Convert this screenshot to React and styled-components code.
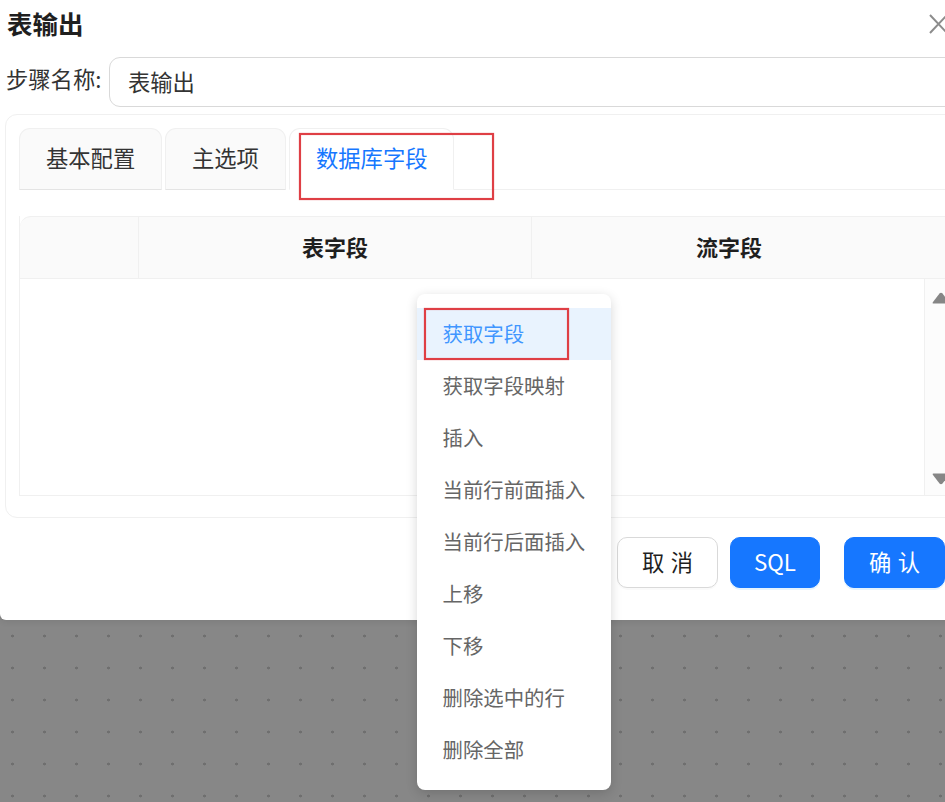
import React from 'react';
import styled, { createGlobalStyle } from 'styled-components';

const GlobalStyle = createGlobalStyle`
  html, body {
    margin: 0;
    padding: 0;
    overflow: hidden;
  }
  body {
    font-family: "Noto Sans CJK SC", "Liberation Sans", sans-serif;
  }
`;

const Page = styled.div`
  position: relative;
  width: 945px;
  height: 802px;
  overflow: hidden;
  background-color: #878787;
  background-image: radial-gradient(circle at 12.5px 12px, #6f6f6f 1.2px, transparent 1.7px);
  background-size: 32px 32px;
  background-position: 0 16px;
`;

const Modal = styled.div`
  position: relative;
  width: 960px;
  height: 620px;
  box-sizing: border-box;
  padding-left: 5px;
  background: #fff;
  border-bottom-left-radius: 6px;
  box-shadow: 0 2px 6px rgba(0, 0, 0, 0.08);
`;

const Header = styled.div`
  display: flex;
  align-items: center;
  justify-content: space-between;
  height: 48px;
  padding: 0 12px 0 2px;
`;

const Title = styled.div`
  font-size: 25.5px;
  line-height: 30px;
  margin-top: -3px;
  font-weight: 700;
  color: #1f1f1f;
`;

const NameRow = styled.div`
  display: flex;
  align-items: center;
  height: 50px;
  margin-top: 9px;
`;

const NameLabel = styled.label`
  width: 104px;
  flex: none;
  padding-left: 1px;
  box-sizing: border-box;
  margin-top: -8px;
  font-size: 22.3px;
  color: #333;
`;

const NameInput = styled.input`
  flex: 1;
  height: 50px;
  box-sizing: border-box;
  padding: 0 18px 3px;
  border: 1px solid #d9d9d9;
  border-radius: 11px;
  font: inherit;
  font-size: 22.3px;
  color: #333;
  outline: none;
`;

const Card = styled.div`
  height: 404px;
  margin-top: 7px;
  box-sizing: border-box;
  padding: 13px 0 0 13px;
  border: 1px solid #f0f0f0;
  border-radius: 12px;
`;

const TabBar = styled.div`
  display: flex;
  gap: 3px;
  height: 62px;
`;

const Tab = styled.div`
  display: flex;
  align-items: center;
  flex: none;
  width: ${p => p.$width}px;
  box-sizing: border-box;
  padding: 0 0 4px 26px;
  font-size: 22.3px;
  border: 1px solid #f0f0f0;
  border-radius: 11px 11px 0 0;
  background: ${p => (p.$active ? '#fff' : '#fafafa')};
  color: ${p => (p.$active ? '#1677ff' : '#333')};
  border-bottom-color: ${p => (p.$active ? '#fff' : '#e4e4e4')};
`;

const TabFill = styled.div`
  flex: 1;
  margin-left: -3px;
  border-bottom: 1px solid #f0f0f0;
`;

const Table = styled.div`
  margin-top: 26px;
  height: 280px;
  box-sizing: border-box;
  border-left: 1px solid #f0f0f0;
  border-bottom: 1px solid #f0f0f0;
  display: flex;
  flex-direction: column;
`;

const TableHead = styled.div`
  display: grid;
  grid-template-columns: 119px 393px 1fr;
  height: 63px;
  flex: none;
  box-sizing: border-box;
  background: #fafafa;
  border-top: 1px solid #f0f0f0;
  border-bottom: 1px solid #f0f0f0;
  border-top-left-radius: 11px;
`;

const HeadCell = styled.div`
  display: flex;
  align-items: center;
  justify-content: center;
  box-sizing: border-box;
  padding-bottom: 4px;
  font-size: 22px;
  font-weight: 700;
  color: #1f1f1f;
  border-right: 1px solid #f0f0f0;
`;

const LastHeadCell = styled(HeadCell)`
  width: 394px;
  border-right: none;
`;

const TableBody = styled.div`
  flex: 1;
  display: flex;
  justify-content: flex-end;
`;

const ScrollBar = styled.div`
  width: 35px;
  flex: none;
  box-sizing: border-box;
  display: flex;
  flex-direction: column;
  justify-content: space-between;
  padding: 13px 0 10px 7px;
  border-left: 1px solid #f0f0f0;
  background: #fcfcfc;
`;

const Footer = styled.div`
  display: flex;
  justify-content: flex-end;
  gap: 12px;
  margin-top: 19px;
  padding-right: 15px;
`;

const Button = styled.button`
  width: ${p => p.$width}px;
  height: 51px;
  margin-left: ${p => p.$offset || 0}px;
  padding: 0 0 4px;
  border-radius: 10px;
  font: inherit;
  font-size: 22.3px;
  word-spacing: 1.5px;
  border: 1px solid ${p => (p.$primary ? '#1677ff' : '#d9d9d9')};
  background: ${p => (p.$primary ? '#1677ff' : '#fff')};
  color: ${p => (p.$primary ? '#fff' : '#1f1f1f')};
  box-shadow: 0 2px 0 ${p => (p.$primary ? 'rgba(5, 145, 255, 0.1)' : 'rgba(0, 0, 0, 0.02)')};
`;

const Menu = styled.ul`
  position: absolute;
  left: 417px;
  top: 294px;
  width: 194px;
  margin: 0;
  padding: 14px 0;
  list-style: none;
  background: #fff;
  border-radius: 8px;
  box-shadow: 0 3px 12px rgba(0, 0, 0, 0.16);
`;

const MenuItem = styled.li`
  height: 52px;
  box-sizing: border-box;
  display: flex;
  align-items: center;
  padding: 0 0 2px 25.5px;
  font-size: 20.4px;
  color: ${p => (p.$hover ? '#4096ff' : '#666')};
  background: ${p => (p.$hover ? '#e9f3fe' : 'transparent')};
`;

const Callout = styled.div`
  position: absolute;
  left: ${p => p.$x}px;
  top: ${p => p.$y}px;
  width: ${p => p.$w}px;
  height: ${p => p.$h}px;
  box-sizing: border-box;
  border: 2px solid #df3f45;
  box-shadow: 0 0 1px rgba(223, 63, 69, 0.7), inset 0 0 1px rgba(223, 63, 69, 0.7);
  pointer-events: none;
`;

const CloseIcon = () => (
  <svg width="20" height="20" viewBox="0 0 20 20" fill="none" stroke="#8c8c8c" strokeWidth="2">
    <path d="M2 1 L19 19 M19 1 L2 19" />
  </svg>
);

const Arrow = ({ down }) => (
  <svg width="18" height="12" viewBox="0 0 18 12" fill="#868686">
    <path
      d={down
        ? 'M1.5 0.5 H16.5 Q18 0.5 17 2 L10.5 10.5 Q9 12 7.5 10.5 L1 2 Q0 0.5 1.5 0.5 Z'
        : 'M1.5 11.5 H16.5 Q18 11.5 17 10 L10.5 1.5 Q9 0 7.5 1.5 L1 10 Q0 11.5 1.5 11.5 Z'}
    />
  </svg>
);

const menuItems = [
  '获取字段',
  '获取字段映射',
  '插入',
  '当前行前面插入',
  '当前行后面插入',
  '上移',
  '下移',
  '删除选中的行',
  '删除全部',
];

export default function App() {
  return (
    <Page>
      <GlobalStyle />
      <Modal>
        <Header>
          <Title>表输出</Title>
          <CloseIcon />
        </Header>
        <NameRow>
          <NameLabel>步骤名称:</NameLabel>
          <NameInput defaultValue="表输出" readOnly />
        </NameRow>
        <Card>
          <TabBar>
            <Tab $width={143}>基本配置</Tab>
            <Tab $width={121}>主选项</Tab>
            <Tab $width={165} $active>数据库字段</Tab>
            <TabFill />
          </TabBar>
          <Table>
            <TableHead>
              <HeadCell />
              <HeadCell>表字段</HeadCell>
              <LastHeadCell>流字段</LastHeadCell>
            </TableHead>
            <TableBody>
              <ScrollBar>
                <Arrow />
                <Arrow down />
              </ScrollBar>
            </TableBody>
          </Table>
        </Card>
        <Footer>
          <Button $width={101}>取 消</Button>
          <Button $width={90} $primary>SQL</Button>
          <Button $width={101} $primary $offset={12}>确 认</Button>
        </Footer>
      </Modal>
      <Menu>
        {menuItems.map((item, i) => (
          <MenuItem key={item} $hover={i === 0}>{item}</MenuItem>
        ))}
      </Menu>
      <Callout $x={299} $y={133} $w={195} $h={67} />
      <Callout $x={424} $y={308} $w={145} $h={52} />
    </Page>
  );
}
